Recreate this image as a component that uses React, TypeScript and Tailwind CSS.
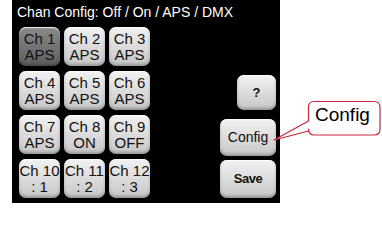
import React from 'react';

const channels = [
  { top: 'Ch 1', bottom: 'APS', active: true },
  { top: 'Ch 2', bottom: 'APS' },
  { top: 'Ch 3', bottom: 'APS' },
  { top: 'Ch 4', bottom: 'APS' },
  { top: 'Ch 5', bottom: 'APS' },
  { top: 'Ch 6', bottom: 'APS' },
  { top: 'Ch 7', bottom: 'APS' },
  { top: 'Ch 8', bottom: 'ON' },
  { top: 'Ch 9', bottom: 'OFF' },
  { top: 'Ch 10', bottom: ': 1' },
  { top: 'Ch 11', bottom: ': 2' },
  { top: 'Ch 12', bottom: ': 3' },
];

const keyClass =
  'flex flex-col items-center justify-center rounded-[7px] text-[#111] shadow-[inset_0_1px_1px_rgba(255,255,255,0.9),inset_0_-2px_3px_rgba(0,0,0,0.25)]';

export default function App() {
  return (
    <div
      className="relative flex h-[206px] w-[382px] bg-white"
      style={{ fontFamily: '"Liberation Sans", Arial, sans-serif' }}
    >
      <div className="ml-[12px] flex h-[203px] w-[268px] flex-col bg-black">
        <p className="ml-[5px] mt-[4px] text-[14px] leading-[16px] text-white">
          Chan Config: Off / On / APS / DMX
        </p>
        <div className="mt-[7px] flex">
          <div className="ml-[7px] grid grid-cols-[repeat(3,41px)] gap-x-[4px] gap-y-[5px]">
            {channels.map((c) => (
              <div
                key={c.top}
                className={`${keyClass} h-[39px] ${
                  c.active
                    ? 'bg-gradient-to-b from-[#8a8a8a] to-[#5e5e5e] text-[#2a2a2a]'
                    : 'bg-gradient-to-b from-[#f2f2f2] to-[#c6c6c6]'
                }`}
              >
                <span className="text-[15px] leading-[17.5px]">{c.top}</span>
                <span className="-mt-[1px] text-[15px] leading-[17.5px]">{c.bottom}</span>
              </div>
            ))}
          </div>
          <div className="ml-auto mr-[4px] flex flex-col items-end pt-[48px]">
            <div className={`${keyClass} h-[35px] w-[39px] bg-gradient-to-b from-[#f2f2f2] to-[#c6c6c6]`}>
              <span className="text-[13px] font-bold">?</span>
            </div>
            <div className={`${keyClass} mt-[9px] h-[37px] w-[56px] bg-gradient-to-b from-[#f2f2f2] to-[#c6c6c6]`}>
              <span className="text-[14px]">Config</span>
            </div>
            <div className={`${keyClass} mt-[4px] h-[38px] w-[56px] bg-gradient-to-b from-[#f2f2f2] to-[#c6c6c6]`}>
              <span className="text-[13px] font-bold tracking-[-0.5px]">Save</span>
            </div>
          </div>
        </div>
      </div>

      <svg className="absolute left-0 top-0" width="382" height="206" viewBox="0 0 382 206">
        <path
          d="M314 101.5 H374 Q380 101.5 380 107.5 V129 Q380 135 374 135 H314 Q308.5 135 308.5 129 V131 L274 140 L308.5 121 V107.5 Q308.5 101.5 314 101.5 Z"
          fill="#fff"
          stroke="#c8283c"
          strokeWidth="1.2"
          strokeLinejoin="round"
        />
      </svg>
      <span className="absolute left-[315px] top-[104px] text-[19px] leading-[22px] text-black">
        Config
      </span>
    </div>
  );
}
